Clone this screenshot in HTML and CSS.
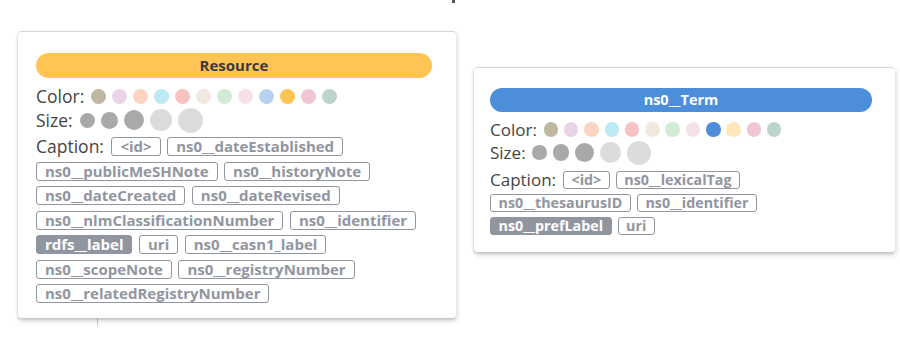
FILE: index.html
```html
<!DOCTYPE html>
<html lang="en">
<head>
<meta charset="utf-8">
<title>Legend</title>
<link rel="stylesheet" href="styles.css">
</head>
<body>
<div class="stage">
  <div class="edge edge-top"></div>
  <div class="edge edge-bottom"></div>

  <div class="card card-resource">
    <div class="pill pill-orange">Resource</div>
    <div class="row">
      <span class="label">Color:</span>
      <span class="dot" style="background:#604A0E"></span>
      <span class="dot" style="background:#C990C0"></span>
      <span class="dot" style="background:#F79767"></span>
      <span class="dot" style="background:#57C7E3"></span>
      <span class="dot" style="background:#F16667"></span>
      <span class="dot" style="background:#D9C8AE"></span>
      <span class="dot" style="background:#8DCC93"></span>
      <span class="dot" style="background:#ECB5C9"></span>
      <span class="dot" style="background:#4C8EDA"></span>
      <span class="dot active" style="background:#FFC454"></span>
      <span class="dot" style="background:#DA7194"></span>
      <span class="dot" style="background:#569480"></span>
    </div>
    <div class="row">
      <span class="label">Size:</span>
      <span class="size s1 on"></span>
      <span class="size s2 on"></span>
      <span class="size s3 on"></span>
      <span class="size s4"></span>
      <span class="size s5"></span>
    </div>
    <div class="caption">
      <span class="label">Caption:</span>
      <span class="tag">&lt;id&gt;</span>
      <span class="tag">ns0__dateEstablished</span>
      <span class="tag">ns0__publicMeSHNote</span>
      <span class="tag">ns0__historyNote</span>
      <span class="tag">ns0__dateCreated</span>
      <span class="tag">ns0__dateRevised</span>
      <span class="tag">ns0__nlmClassificationNumber</span>
      <span class="tag">ns0__identifier</span>
      <span class="tag selected">rdfs__label</span>
      <span class="tag">uri</span>
      <span class="tag">ns0__casn1_label</span>
      <span class="tag">ns0__scopeNote</span>
      <span class="tag">ns0__registryNumber</span>
      <span class="tag">ns0__relatedRegistryNumber</span>
    </div>
  </div>

  <div class="card card-term">
    <div class="pill pill-blue">ns0__Term</div>
    <div class="row">
      <span class="label">Color:</span>
      <span class="dot" style="background:#604A0E"></span>
      <span class="dot" style="background:#C990C0"></span>
      <span class="dot" style="background:#F79767"></span>
      <span class="dot" style="background:#57C7E3"></span>
      <span class="dot" style="background:#F16667"></span>
      <span class="dot" style="background:#D9C8AE"></span>
      <span class="dot" style="background:#8DCC93"></span>
      <span class="dot" style="background:#ECB5C9"></span>
      <span class="dot active" style="background:#4C8EDA"></span>
      <span class="dot" style="background:#FFC454"></span>
      <span class="dot" style="background:#DA7194"></span>
      <span class="dot" style="background:#569480"></span>
    </div>
    <div class="row">
      <span class="label">Size:</span>
      <span class="size s1 on"></span>
      <span class="size s2 on"></span>
      <span class="size s3 on"></span>
      <span class="size s4"></span>
      <span class="size s5"></span>
    </div>
    <div class="caption">
      <span class="label">Caption:</span>
      <span class="tag">&lt;id&gt;</span>
      <span class="tag">ns0__lexicalTag</span>
      <span class="tag">ns0__thesaurusID</span>
      <span class="tag">ns0__identifier</span>
      <span class="tag selected">ns0__prefLabel</span>
      <span class="tag">uri</span>
    </div>
  </div>
</div>
</body>
</html>
```
FILE: styles.css
```css
html, body {
  margin: 0;
  padding: 0;
  background: #ffffff;
}

body {
  font-family: "Open Sans", "DejaVu Sans", sans-serif;
  color: #444444;
  width: 900px;
  height: 354px;
  overflow: hidden;
}

.stage {
  position: relative;
  display: flex;
  align-items: flex-start;
  padding-left: 18px;
  height: 354px;
  box-sizing: border-box;
}

.edge {
  position: absolute;
  background: #555;
}

.edge-top {
  left: 452px;
  top: 0;
  width: 3px;
  height: 3px;
}

.edge-bottom {
  left: 97px;
  top: 316px;
  width: 1px;
  height: 10px;
  background: #c8c8c8;
}

.card {
  position: relative;
  background: #ffffff;
  border-radius: 4px;
  box-sizing: border-box;
  border-top: 1px solid #d6d6d6;
  box-shadow: -1px 2px 2px rgba(0, 0, 0, 0.10), 1px 3px 5px rgba(0, 0, 0, 0.16);
}

.card-resource {
  width: 438px;
  margin-top: 31px;
  padding: 21px 24px 15px 18px;
}

.card-term {
  width: 421px;
  margin-top: 67px;
  margin-left: 18px;
  padding: 20px 23px 17px 16px;
}

.pill {
  height: 25px;
  border-radius: 13px;
  font-weight: 700;
  font-size: 15px;
  line-height: 25px;
  text-align: center;
}

.pill-orange {
  background: #ffc454;
  color: #3a3a3a;
}

.pill-blue {
  background: #4c8eda;
  color: #ffffff;
  height: 24px;
  line-height: 24px;
  font-size: 14.5px;
}

.row {
  display: flex;
  align-items: center;
  gap: 6px;
  height: 24px;
}

.pill + .row {
  margin-top: 6px;
}

.label {
  font-size: 17.5px;
  line-height: 19px;
  color: #444444;
  margin-right: 1px;
}

.dot {
  width: 15px;
  height: 15px;
  border-radius: 50%;
  opacity: 0.4;
  flex: none;
}

.dot.active {
  opacity: 1;
}

.size {
  border-radius: 50%;
  background: #dcdcdc;
  flex: none;
}

.size.on {
  background: #a9a9a9;
}

.s1 { width: 15px; height: 15px; }
.s2 { width: 17px; height: 17px; }
.s3 { width: 20px; height: 20px; }
.s4 { width: 22px; height: 22px; }
.s5 { width: 25px; height: 25px; }

.caption {
  display: flex;
  flex-wrap: wrap;
  align-items: center;
  column-gap: 6.5px;
  row-gap: 5.5px;
  margin-top: 5px;
}

.tag {
  display: inline-block;
  box-sizing: border-box;
  height: 19px;
  padding: 0 8px;
  border: 1px solid #9195a0;
  border-radius: 3px;
  font-size: 15px;
  font-weight: 700;
  line-height: 17px;
  color: #9195a0;
  white-space: nowrap;
}

.tag.selected {
  background: #9195a0;
  color: #ffffff;
}

/* second legend renders slightly smaller */
.card-term .row {
  height: 23px;
  gap: 5.8px;
}

.card-term .label {
  font-size: 17px;
}

.card-term .dot {
  width: 14.5px;
  height: 14.5px;
}

.card-term .s1 { width: 14.5px; height: 14.5px; }
.card-term .s2 { width: 16.5px; height: 16.5px; }
.card-term .s3 { width: 19px; height: 19px; }
.card-term .s4 { width: 21.5px; height: 21.5px; }
.card-term .s5 { width: 24px; height: 24px; }

.card-term .caption {
  margin-top: 6px;
  row-gap: 5px;
  column-gap: 6px;
}

.card-term .tag {
  height: 18px;
  font-size: 14.3px;
  line-height: 16px;
  padding: 0 7.5px;
  font-weight: 700;
}
```
